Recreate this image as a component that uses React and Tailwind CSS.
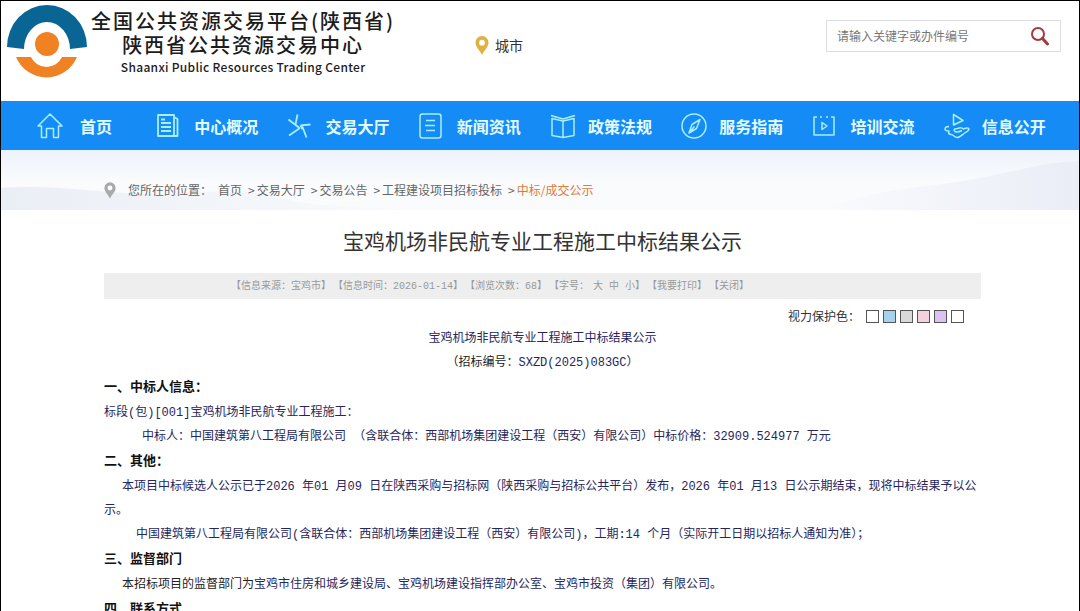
import React, { useState } from "react";

const HomeIcon = () => (
  <path d="M4.500 13H1L13 1l12 12h-3.500v11.500h-5v-9h-7v9h-5z" />
);

const NewsIcon = () => (
  <>
    <path d="M2 2h16v21H2zM18 4l3.500 2v17H18" strokeWidth="1.800" />
    <path d="M5 6.500h4M5 10h10M5 14h10M5 18h10" strokeWidth="1.800" />
  </>
);

const PinwheelIcon = () => (
  <path
    d="M10.500 1.500L8.500 11.500M1.500 6.500l11 8.500M2 22.500L13 15M23.500 11.500l-10 .800M13.500 12.300l2 4M15 12.500l4.500 12"
    strokeWidth="1.800"
  />
);

const ListIcon = () => (
  <>
    <rect x="1" y="1" width="21" height="24" rx="2.500" />
    <path d="M7 7.500h9M6 12.500h10M7 17.500h9" />
  </>
);

const BookIcon = () => (
  <>
    <path d="M13 8L2 5.500v17l11 2 11-2v-17L13 8v16.500" />
    <path d="M1 2.500l12 3.500 12-3.500" />
  </>
);

const CompassIcon = () => (
  <>
    <circle cx="13" cy="13" r="12" />
    <path d="M19 6.500l-3.500 9-7.500 4.500 3-8.500zM8 20l5.500-6.500" />
  </>
);

const VideoIcon = () => (
  <>
    <path d="M5 4H2v18h20V4h-3M8 4h2M14 4h2" />
    <path d="M10 9.500v7l5-3.500z" />
  </>
);

const HandIcon = () => (
  <>
    <path d="M9.500 12V1.500l9.500 6z" />
    <path d="M9.500 12l2-1.500" />
    <path d="M5 13.500c-2.500 0-4 1-4 2.500s2 2 4 2c-1 2 0 3.500 2 3.500 2.500 0 3.500 3 6 3 3 0 5-2.500 7-4s4.500-2 5-4.500c0-1.500-3-1.500-5.500 0-2-2-4-1.500-6-.500-2.500 0-5 1-2.500 3 2 1 5 0 7-1" />
  </>
);

const navItems = [
  { label: "首页", icon: HomeIcon },
  { label: "中心概况", icon: NewsIcon },
  { label: "交易大厅", icon: PinwheelIcon },
  { label: "新闻资讯", icon: ListIcon },
  { label: "政策法规", icon: BookIcon },
  { label: "服务指南", icon: CompassIcon },
  { label: "培训交流", icon: VideoIcon },
  { label: "信息公开", icon: HandIcon },
];

const crumbs = ["首页", "交易大厅", "交易公告", "工程建设项目招标投标"];

const swatches = [
  { name: "白色", color: "bg-white" },
  { name: "蓝色", color: "bg-[#a5d3ee]" },
  { name: "灰色", color: "bg-[#d9d9d9]" },
  { name: "粉色", color: "bg-[#f6d0dc]" },
  { name: "紫色", color: "bg-[#dcc2f0]" },
  { name: "默认", color: "bg-white" },
];

// Map pin, used in the header and in the breadcrumb
function Pin({ className }) {
  return (
    <svg viewBox="0 0 14 19" className={className} aria-hidden="true">
      <path
        fill="currentColor"
        fillRule="evenodd"
        d="M7 0a6.500 6.500 0 0 0-6.500 6.600C.500 11 5 14.500 7 19c2-4.500 6.500-8 6.500-12.400A6.500 6.500 0 0 0 7 0zm0 3.800a2.900 2.900 0 1 1 0 5.800 2.900 2.900 0 0 1 0-5.800z"
      />
    </svg>
  );
}

function Logo() {
  return (
    <svg viewBox="0 0 82 76" className="mt-1 h-[76px] w-[82px] shrink-0" aria-hidden="true">
      <path fill="#086594" d="M1 42A40 42 0 0 1 81 42L64 44A23 27 0 0 0 18 44z" />
      <path fill="#f08224" d="M10 52h15a17 17 0 0 0 31 0h15a33 33 0 0 1-61 0z" />
      <circle cx="41" cy="39" r="12" fill="#f08224" />
    </svg>
  );
}

function Header() {
  const [keyword, setKeyword] = useState("");

  return (
    <header className="flex h-[100px] items-start pr-[18px] pl-[5px]">
      <div className="flex w-[469px]">
        <Logo />
        <div className="flex flex-col items-center pt-2 pl-[3px] font-medium whitespace-nowrap text-[#1c1c1c]">
          <p className="text-xl leading-6 tracking-widest">全国公共资源交易平台(陕西省)</p>
          <p className="text-xl leading-6 tracking-widest">陕西省公共资源交易中心</p>
          <p className="text-xs leading-5 tracking-wide">
            Shaanxi Public Resources Trading Center
          </p>
        </div>
      </div>
      <a href="#city" className="flex items-center gap-[6px] pt-[34px] text-sm text-[#333]">
        <Pin className="h-[19px] w-[14px] text-[#e0b040]" />
        城市
      </a>
      <form
        onSubmit={(e) => e.preventDefault()}
        className="mt-[19px] ml-auto flex h-8 w-[235px] items-center border border-[#ddd] px-[10px]"
      >
        <input
          type="text"
          aria-label="搜索"
          placeholder="请输入关键字或办件编号"
          value={keyword}
          onChange={(e) => setKeyword(e.target.value)}
          className="min-w-0 flex-1 text-xs text-[#666] outline-none placeholder:text-[#777]"
        />
        <button type="submit" aria-label="搜索">
          <svg viewBox="0 0 20 20" className="h-5 w-5" fill="none" stroke="#a33a3e" aria-hidden="true">
            <circle cx="8" cy="8" r="6" strokeWidth="2" />
            <path d="M12.500 12.500l5 5.500" strokeWidth="3" strokeLinecap="round" />
          </svg>
        </button>
      </form>
    </header>
  );
}

function Nav() {
  return (
    <nav className="grid h-[49px] grid-cols-[119fr_repeat(7,131fr)] bg-[#158cf5] pr-1 pl-9">
      {navItems.map(({ label, icon: Icon }, i) => (
        <a
          key={label}
          href="#nav"
          className={`flex items-center text-base font-bold whitespace-nowrap text-[#e2fbff] ${
            i === 0 ? "gap-[17px]" : "gap-3"
          }`}
        >
          <svg
            viewBox="0 0 26 26"
            className="h-[26px] w-[26px] shrink-0"
            fill="none"
            stroke="#a8efff"
            strokeWidth="1.500"
            strokeLinejoin="round"
            aria-hidden="true"
          >
            <Icon />
          </svg>
          {label}
        </a>
      ))}
    </nav>
  );
}

function Breadcrumb() {
  return (
    <div className="relative h-[60px] bg-linear-to-b from-[#edf3fa] via-[#f9fbfd] to-[#f9fbfd]">
      <svg
        viewBox="0 0 1080 60"
        preserveAspectRatio="none"
        className="absolute inset-0 h-full w-full"
        aria-hidden="true"
      >
        <defs>
          <linearGradient id="hill" x1="0" y1="0" x2="1" y2="0">
            <stop offset="0" stopColor="#eaeef5" />
            <stop offset="1" stopColor="#f9fbfd" />
          </linearGradient>
          <linearGradient id="ridge" x1="0" y1="0" x2="1" y2="0">
            <stop offset="0" stopColor="#f9fbfd" />
            <stop offset="1" stopColor="#eaedf6" />
          </linearGradient>
        </defs>
        <path fill="url(#hill)" d="M0 38c60-4 100 6 150 6s80-8 130 4 90 8 140 12H0z" />
        <path fill="url(#ridge)" d="M820 60c60-24 120-22 170-34 40-8 60-14 90-15v49z" />
      </svg>
      <div className="relative flex items-center pt-[30px] pl-[103px] text-xs leading-5 text-[#666]">
        <Pin className="mr-3 h-[17px] w-3 text-[#aaa]" />
        <span className="mr-[6px]">您所在的位置：</span>
        {crumbs.map((crumb) => (
          <React.Fragment key={crumb}>
            <a href="#crumb">{crumb}</a>
            <span className="pr-[2px] pl-[6px]">&gt;</span>
          </React.Fragment>
        ))}
        <a href="#current" className="text-[#dd7a3c]">
          中标/成交公示
        </a>
      </div>
    </div>
  );
}

function MetaBar() {
  return (
    <div className="flex h-[26px] items-center gap-[2px] bg-[#eee] pl-[127px] font-[Liberation_Mono,Noto_Sans_CJK_SC,monospace] text-[10px] whitespace-nowrap text-[#999]">
      <span>【信息来源：宝鸡市】</span>
      <span>【信息时间：2026-01-14】</span>
      <span>【浏览次数：68】</span>
      <span className="flex">
        【字号：
        <button type="button" className="ml-1">大</button>
        <button type="button" className="mx-[6px]">中</button>
        <button type="button">小</button>】
      </span>
      <button type="button">【我要打印】</button>
      <button type="button">【关闭】</button>
    </div>
  );
}

function SectionTitle({ children }) {
  return <h3 className="text-[13px] leading-[26px] font-bold text-[#111]">{children}</h3>;
}

function Article({ background }) {
  return (
    <article className={`font-[Liberation_Mono,Noto_Sans_CJK_SC,monospace] text-xs leading-6 text-[#26265c] ${background}`}>
      <h2 className="text-center">宝鸡机场非民航专业工程施工中标结果公示</h2>
      <p className="text-center">
        <span className="text-[#222]">（招标编号：</span>SXZD(2025)083GC）
      </p>
      <SectionTitle>一、中标人信息：</SectionTitle>
      <p>标段(包)[001]宝鸡机场非民航专业工程施工：</p>
      <p className="pl-[38px]">
        中标人：中国建筑第八工程局有限公司 （含联合体：西部机场集团建设工程（西安）有限公司）中标价格：32909.524977 万元
      </p>
      <SectionTitle>二、其他：</SectionTitle>
      <p className="indent-[18px]">
        本项目中标候选人公示已于2026 年01 月09 日在陕西采购与招标网（陕西采购与招标公共平台）发布，2026 年01 月13 日公示期结束，现将中标结果予以公示。
      </p>
      <p className="indent-8">
        中国建筑第八工程局有限公司(含联合体：西部机场集团建设工程（西安）有限公司)，工期:14 个月（实际开工日期以招标人通知为准）；
      </p>
      <SectionTitle>三、监督部门</SectionTitle>
      <p className="indent-[18px]">
        <span className="text-[#222]">本招标项目的监督部门为</span>
        宝鸡市住房和城乡建设局、宝鸡机场建设指挥部办公室、宝鸡市投资（集团）有限公司。
      </p>
      <SectionTitle>四、联系方式</SectionTitle>
    </article>
  );
}

const App = () => {
  const [background, setBackground] = useState("bg-white");

  return (
    <div className="h-screen overflow-hidden border border-b-0 border-black bg-white font-[Noto_Sans_CJK_SC,sans-serif]">
      <Header />
      <Nav />
      <Breadcrumb />
      <main className="pr-[98px] pl-[103px]">
        <h1 className="pt-[14px] pb-[17px] text-center text-[21px] leading-8 text-[#333]">
          宝鸡机场非民航专业工程施工中标结果公示
        </h1>
        <MetaBar />
        <div className="flex h-7 items-center justify-end gap-1 pt-[6px] pr-[17px] text-xs text-[#333]">
          <span className="mr-[2px]">视力保护色：</span>
          {swatches.map(({ name, color }) => (
            <button
              key={name}
              type="button"
              aria-label={name}
              onClick={() => setBackground(color)}
              className={`h-[13px] w-[13px] border border-[#555] ${color}`}
            />
          ))}
        </div>
        <Article background={background} />
      </main>
    </div>
  );
};

export default App;
